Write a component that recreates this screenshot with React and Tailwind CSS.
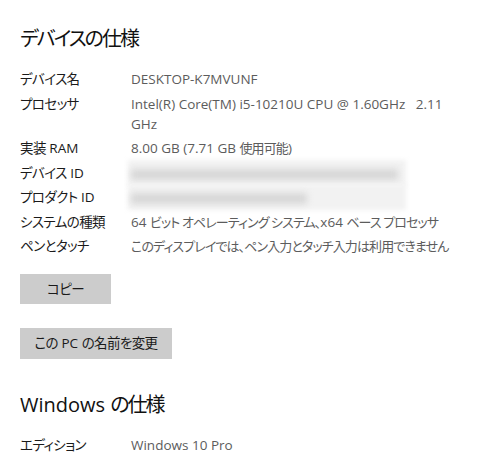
import React from "react";

function J({ children }) {
  return <span className="text-[13px] tracking-[-0.9px]">{children}</span>;
}

function L({ children }) {
  return <span className="tracking-[-0.6px]">{children}</span>;
}

function Row({ label, children }) {
  return (
    <div className="flex text-[13.5px] leading-[20px]">
      <div className="w-[111px] shrink-0 text-[#1a1a1a] whitespace-pre">{label}</div>
      <div className="text-[#5c5c5c]">{children}</div>
    </div>
  );
}

function Blur({ bar }) {
  return (
    <div className="relative h-[20px] w-[272px]">
      <div className="absolute -left-[3px] -right-[3px] -top-[3px] -bottom-[3px] bg-[#f2f2f2] blur-[2px]" />
      <div
        className="absolute left-0 top-[6px] h-[11px] bg-[#d8d8d8] blur-[3px]"
        style={{ width: bar }}
      />
    </div>
  );
}

export default function App() {
  return (
    <div className="w-[488px] h-[461px] bg-white overflow-hidden pl-[20px] pt-[26px] [font-family:'Open_Sans','Noto_Sans_CJK_JP',sans-serif] [font-feature-settings:'palt']">
      <h1 className="text-[20px] leading-[26px] text-[#111] tracking-[-2px]">デバイスの仕様</h1>
      <div className="mt-[17px] flex flex-col gap-[4.5px]">
        <Row label={<L>デバイス名</L>}>DESKTOP-K7MVUNF</Row>
        <Row label={<L>プロセッサ</L>}>
          <span className="whitespace-pre">Intel(R) Core(TM) i5-10210U CPU @ 1.60GHz   2.11</span>
          <br />
          GHz
        </Row>
        <Row label={<><L>実装</L> RAM</>}>
          8.00 GB (7.71 GB <J>使用可能</J>)
        </Row>
        <Row label={<><L>デバイス</L> ID</>}>
          <Blur bar={267} />
        </Row>
        <Row label={<><L>プロダクト</L> ID</>}>
          <Blur bar={176} />
        </Row>
        <Row label={<L>システムの種類</L>}>
          <span className="whitespace-nowrap">
            64 <J>ビット オペレーティング システム、</J>x64 <J>ベース プロセッサ</J>
          </span>
        </Row>
        <Row label={<L>ペンとタッチ</L>}>
          <span className="whitespace-nowrap">
            <J>このディスプレイでは、ペン入力とタッチ入力は利用できません</J>
          </span>
        </Row>
      </div>
      <button className="mt-[18px] block w-[91px] h-[30px] bg-[#cccccc] text-[13.5px] text-[#1a1a1a]">
        <L>コピー</L>
      </button>
      <button className="mt-[24px] block w-[152px] h-[31px] bg-[#cccccc] text-[13.5px] text-[#1a1a1a] whitespace-pre">
        <L>この</L> PC <L>の名前を変更</L>
      </button>
      <h2 className="mt-[33px] text-[20px] leading-[26px] text-[#111]">
        Windows <span className="tracking-[-2px]">の仕様</span>
      </h2>
      <div className="mt-[17px]">
        <Row label={<L>エディション</L>}>Windows 10 Pro</Row>
      </div>
    </div>
  );
}
